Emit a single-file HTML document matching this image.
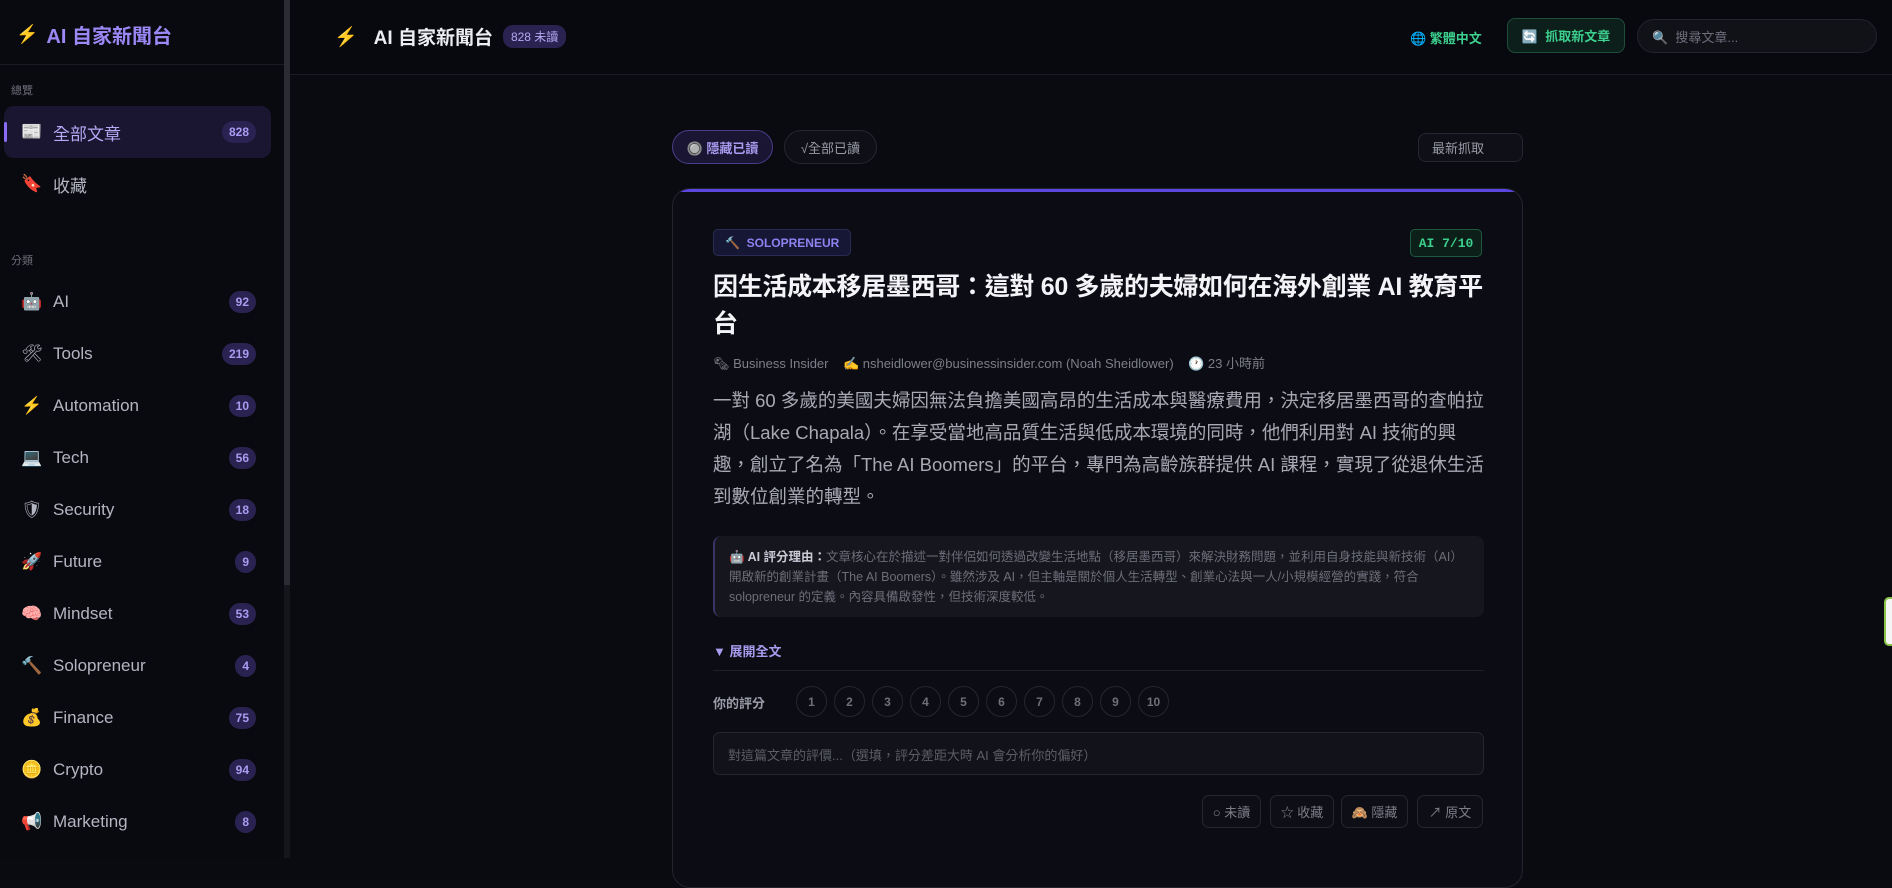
<!DOCTYPE html>
<html><head><meta charset="utf-8"><style>
*{box-sizing:border-box;margin:0;padding:0}
body{width:1892px;height:858px;overflow:hidden;background:#0a0b11;font-family:"Liberation Sans","Noto Sans CJK TC",sans-serif;color:#c9cad6;position:relative}
.sb{position:absolute;left:0;top:0;width:284px;height:858px;background:#090a10}
.sbscroll{position:absolute;left:284px;top:0;width:6px;height:858px;background:#15161c}
.sbscroll i{position:absolute;left:0;top:0;width:6px;height:585px;background:#2b2c33;display:block}
.logo{position:absolute;left:16px;top:20px;font-size:20px;font-weight:bold;color:#9b87f5;display:flex;align-items:center;gap:8px}
.sbline{position:absolute;left:0;top:64px;width:284px;height:1px;background:#1b1c24}
.lbl{position:absolute;left:11px;font-size:11px;color:#6d6e7a}
.item{position:absolute;left:4px;width:267px;height:52px;display:flex;align-items:center;font-size:17px;color:#b4b5c2}
.item .ic{width:24px;margin-left:16px;margin-right:9px;font-size:17px;text-align:center}
.item .bd{position:absolute;right:15px;top:50%;transform:translateY(-50%);background:#2a2352;color:#a99cf0;font-size:12px;font-weight:bold;padding:4px 7px;border-radius:11px}
.item.act{background:#1a1530;border-radius:10px}
.item.act:before{content:"";position:absolute;left:0;top:16px;width:3px;height:20px;background:#8b6cf5;border-radius:2px}
.hdr{position:absolute;left:290px;top:0;right:0;height:75px;background:#08090e;border-bottom:1px solid #1b1c24}
.ttl{position:absolute;left:44px;top:23px;font-size:19px;font-weight:bold;color:#ececf3;display:flex;align-items:center}
.pill{background:#2a2352;color:#b4a8f3;font-size:12px;padding:3px 8px;border-radius:10px;margin-left:10px;font-weight:normal}
.btn{position:absolute;border-radius:8px;font-size:13px;display:flex;align-items:center;justify-content:center}
.card{position:absolute;left:672px;top:188px;width:851px;height:700px;background:#0c0d14;border:1px solid #23242d;border-radius:18px;overflow:hidden}
.card:before{content:"";position:absolute;left:0;top:0;right:0;height:3px;background:#5b46e0}
.circ{position:absolute;top:686px;width:31px;height:31px;border:1px solid #25262f;border-radius:50%;font-size:12px;color:#6e6f7a;display:flex;align-items:center;justify-content:center;font-weight:bold}
.ab{position:absolute;top:795px;height:33px;border:1px solid #25262f;border-radius:7px;font-size:13px;color:#7d7e8a;display:flex;align-items:center;justify-content:center;background:#0e0f16}
</style></head><body>
<div class="sb">
<div class="logo"><span style="font-size:18px">⚡</span>AI 自家新聞台</div>
<div class="sbline"></div>
<div class="lbl" style="top:82px">總覽</div>
<div class="item act" style="top:106px"><span class="ic">📰</span><span style="color:#b6a9f6">全部文章</span><span class="bd">828</span></div>
<div class="item" style="top:158px"><span class="ic">🔖</span>收藏</div>
<div class="lbl" style="top:252px">分類</div>
<div class="item" style="top:276px"><span class="ic">🤖</span>AI<span class="bd">92</span></div>
<div class="item" style="top:328px"><span class="ic">🛠</span>Tools<span class="bd">219</span></div>
<div class="item" style="top:380px"><span class="ic" style="color:#f39a2b">⚡</span>Automation<span class="bd">10</span></div>
<div class="item" style="top:432px"><span class="ic">💻</span>Tech<span class="bd">56</span></div>
<div class="item" style="top:484px"><span class="ic">🛡</span>Security<span class="bd">18</span></div>
<div class="item" style="top:536px"><span class="ic">🚀</span>Future<span class="bd">9</span></div>
<div class="item" style="top:588px"><span class="ic">🧠</span>Mindset<span class="bd">53</span></div>
<div class="item" style="top:640px"><span class="ic">🔨</span>Solopreneur<span class="bd">4</span></div>
<div class="item" style="top:692px"><span class="ic">💰</span>Finance<span class="bd">75</span></div>
<div class="item" style="top:744px"><span class="ic">🪙</span>Crypto<span class="bd">94</span></div>
<div class="item" style="top:796px"><span class="ic">📢</span>Marketing<span class="bd">8</span></div>
</div>
<div class="sbscroll"><i></i></div>
<div class="hdr">
<div class="ttl"><span style="color:#fff;margin-right:16px">⚡</span>AI 自家新聞台<span class="pill">828 未讀</span></div>
</div>
<div class="btn" style="left:1410px;top:22px;height:30px;color:#3ccf8e;font-weight:bold">🌐&nbsp;繁體中文</div>
<div class="btn" style="left:1507px;top:18px;width:118px;height:35px;background:#0d1f1a;border:1px solid #1e4d3a;color:#3ccf8e;font-weight:bold">🔄&nbsp; 抓取新文章</div>
<div class="btn" style="left:1637px;top:19px;width:240px;height:34px;background:#111218;border:1px solid #23242d;border-radius:17px;justify-content:flex-start;padding-left:14px;color:#6d6e7a">🔍&nbsp; 搜尋文章...</div>
<div class="btn" style="left:672px;top:130px;width:101px;height:34px;border:1px solid #4a3d8a;background:#1a1533;border-radius:17px;color:#a99cf0;font-weight:bold">🔘 隱藏已讀</div>
<div class="btn" style="left:784px;top:130px;width:93px;height:34px;border:1px solid #25262f;background:#0f1017;border-radius:17px;color:#9a9ba8">√全部已讀</div>
<div class="btn" style="left:1418px;top:133px;width:105px;height:29px;border:1px solid #25262f;background:#0f1017;color:#9a9ba8;justify-content:flex-start;padding-left:13px">最新抓取</div>
<div class="card">
<div style="position:absolute;left:40px;top:40px;height:27px;padding:0 11px;background:#161735;border:1px solid #2a2b50;border-radius:5px;color:#8b83f0;font-size:12px;font-weight:bold;display:flex;align-items:center">🔨&nbsp; SOLOPRENEUR</div>
<div style="position:absolute;right:40px;top:40px;height:28px;width:72px;background:#0c1f18;border:1px solid #1f5a40;border-radius:5px;color:#3ccf8e;font-size:13px;font-weight:bold;font-family:'Liberation Mono',monospace;display:flex;align-items:center;justify-content:center">AI 7/10</div>
<div style="position:absolute;left:40px;top:80px;width:790px;font-size:25px;line-height:37px;font-weight:bold;color:#f4f4f8;letter-spacing:-0.3px">因生活成本移居墨西哥：這對 60 多歲的夫婦如何在海外創業 AI 教育平台</div>
<div style="position:absolute;left:40px;top:164px;font-size:13px;color:#7d7e8a">🗞 Business Insider &nbsp;&nbsp; ✍ nsheidlower@businessinsider.com (Noah Sheidlower) &nbsp;&nbsp; 🕐 23 小時前</div>
<div style="position:absolute;left:40px;top:196px;width:772px;font-size:18.5px;line-height:32px;color:#a8a9b5">一對 60 多歲的美國夫婦因無法負擔美國高昂的生活成本與醫療費用，決定移居墨西哥的查帕拉湖（Lake Chapala）。在享受當地高品質生活與低成本環境的同時，他們利用對 AI 技術的興趣，創立了名為「The AI Boomers」的平台，專門為高齡族群提供 AI 課程，實現了從退休生活到數位創業的轉型。</div>
<div style="position:absolute;left:40px;top:347px;width:771px;height:81px;background:#15161e;border-left:2px solid #3a3566;border-radius:8px;padding:11px 14px;font-size:12.5px;line-height:20px;color:#6d6e7a"><b style="color:#c9cad6">🤖 AI 評分理由：</b>文章核心在於描述一對伴侶如何透過改變生活地點（移居墨西哥）來解決財務問題，並利用自身技能與新技術（AI）開啟新的創業計畫（The AI Boomers）。雖然涉及 AI，但主軸是關於個人生活轉型、創業心法與一人/小規模經營的實踐，符合 solopreneur 的定義。內容具備啟發性，但技術深度較低。</div>
<div style="position:absolute;left:40px;top:452px;font-size:13px;font-weight:bold;color:#a99cf0">▼ 展開全文</div>
<div style="position:absolute;left:40px;top:481px;width:771px;height:1px;background:#1f2029"></div>
<div style="position:absolute;left:40px;top:504px;font-size:13px;font-weight:bold;color:#9a9ba8">你的評分</div>
<div style="position:absolute;left:40px;top:543px;width:771px;height:43px;background:#12131a;border:1px solid #25262f;border-radius:7px;padding:12px 14px;font-size:13px;color:#5c5d68">對這篇文章的評價...（選填，評分差距大時 AI 會分析你的偏好）</div>
</div>
<div class="circ" style="left:796px">1</div><div class="circ" style="left:834px">2</div><div class="circ" style="left:872px">3</div><div class="circ" style="left:910px">4</div><div class="circ" style="left:948px">5</div><div class="circ" style="left:986px">6</div><div class="circ" style="left:1024px">7</div><div class="circ" style="left:1062px">8</div><div class="circ" style="left:1100px">9</div><div class="circ" style="left:1138px">10</div>
<div class="ab" style="left:1202px;width:59px">○ 未讀</div>
<div class="ab" style="left:1270px;width:64px">☆ 收藏</div>
<div class="ab" style="left:1341px;width:67px">🙈 隱藏</div>
<div class="ab" style="left:1417px;width:66px">↗ 原文</div>
<div style="position:absolute;left:1884px;top:597px;width:10px;height:49px;border:2px solid #8bc34a;border-right:none;border-radius:5px 0 0 5px;background:#f5f5f5"></div>
</body></html>
